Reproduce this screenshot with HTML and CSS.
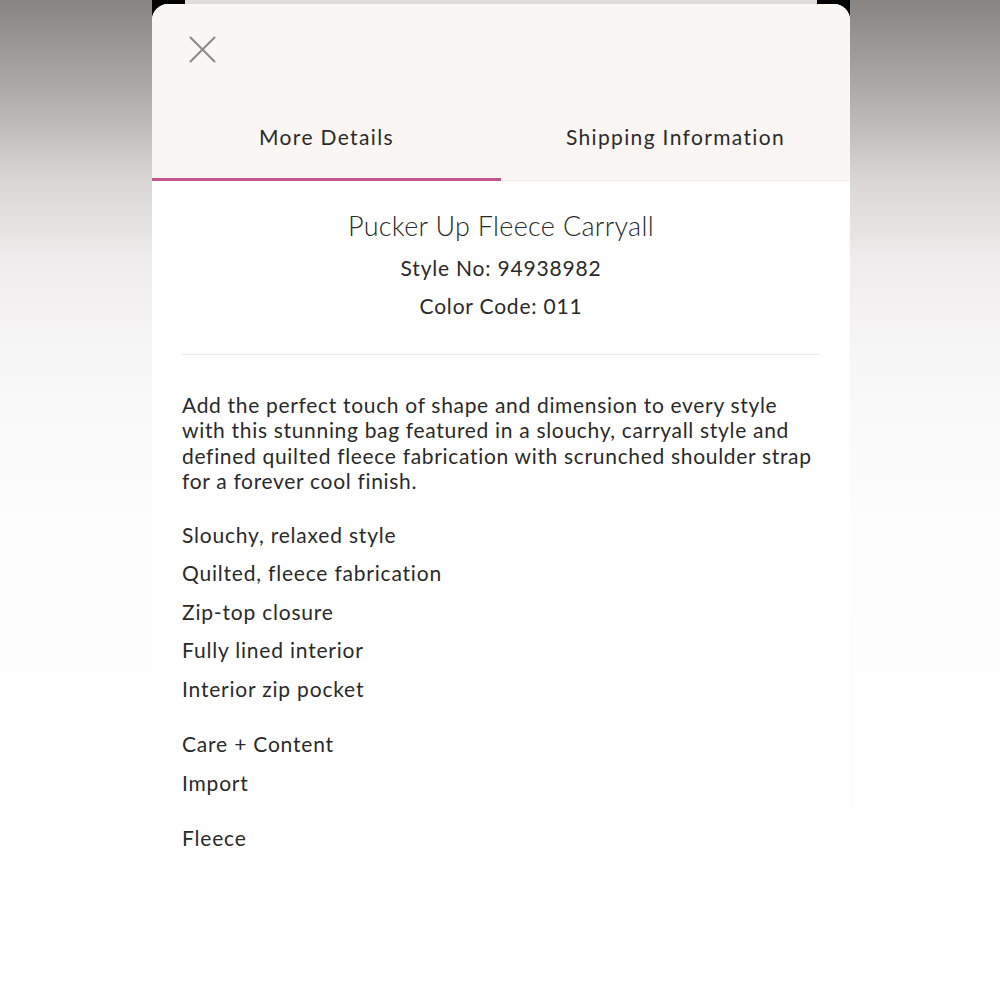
FILE: index.html
```html
<!DOCTYPE html>
<html lang="en">
<head>
<meta charset="utf-8">
<title>More Details</title>
<link rel="stylesheet" href="styles.css">
</head>
<body>
<div class="stage">
  <div class="phone">
    <div class="sheet">
      <header class="sheet-head">
        <div class="close-row">
          <button class="close" aria-label="Close">
            <svg width="28" height="28" viewBox="0 0 28 28" aria-hidden="true">
              <path d="M1.5 1.5 L25.5 25.5 M25.5 1.5 L1.5 25.5" stroke="#8d8985" stroke-width="2" fill="none" stroke-linecap="round"/>
            </svg>
          </button>
        </div>
        <nav class="tabs">
          <div class="tab tab-active">More Details</div>
          <div class="tab">Shipping Information</div>
        </nav>
      </header>
      <section class="sheet-body">
        <div class="product">
          <h1 class="product-name">Pucker Up Fleece Carryall</h1>
          <p class="product-meta">Style No: 94938982</p>
          <p class="product-meta">Color Code: 011</p>
        </div>
        <hr class="rule">
        <p class="desc">Add the perfect touch of shape and dimension to every style with this stunning bag featured in a slouchy, carryall style and defined quilted fleece fabrication with scrunched shoulder strap for a forever cool finish.</p>
        <ul class="features">
          <li>Slouchy, relaxed style</li>
          <li>Quilted, fleece fabrication</li>
          <li>Zip-top closure</li>
          <li>Fully lined interior</li>
          <li>Interior zip pocket</li>
        </ul>
        <div class="care">
          <p>Care + Content</p>
          <p>Import</p>
          <p class="care-gap">Fleece</p>
        </div>
      </section>
    </div>
  </div>
</div>
</body>
</html>
```

FILE: styles.css
```css
html, body {
  margin: 0;
  padding: 0;
}

body {
  font-family: Lato, "Open Sans", sans-serif;
  color: #2a2a2a;
  background: linear-gradient(to bottom, #878482 0px, #aeaaa7 90px, #d9d6d4 180px, #eeecec 260px, #f8f7f7 360px, #fdfdfd 520px, #fefefe 1000px);
  min-height: 1000px;
}

.stage {
  display: flex;
  justify-content: center;
  min-height: 1000px;
  padding-left: 2px;
}

.phone {
  width: 698px;
  min-height: 1000px;
  background:
    linear-gradient(to right, #000 0, #000 33px, #dedbd8 33px, #dedbd8 665px, #000 665px, #000 100%) top / 100% 20px no-repeat,
    #fff;
  padding-top: 4px;
  box-sizing: border-box;
  display: flex;
  flex-direction: column;
}

.sheet {
  flex: 1;
  background: #fff;
  border-radius: 16px 16px 0 0;
  overflow: hidden;
}

.sheet-head {
  background: #faf6f3;
}

.close-row {
  height: 96px;
  padding: 32px 0 0 37px;
  box-sizing: border-box;
}

.close {
  border: 0;
  padding: 0;
  margin: 0;
  background: none;
  width: 28px;
  height: 28px;
  display: block;
}

.close svg {
  display: block;
}

.tabs {
  display: grid;
  grid-template-columns: 1fr 1fr;
}

.tab {
  height: 81px;
  display: flex;
  align-items: center;
  justify-content: center;
  font-size: 21px;
  letter-spacing: 1.35px;
  color: #2b2b2b;
  padding-bottom: 9px;
  box-sizing: border-box;
  box-shadow: inset 0 -1px 0 #efebe8;
}

.tab-active {
  box-shadow: inset 0 -3px 0 #c5568d;
}

.sheet-body {
  padding: 0 30px 40px;
}

.product {
  text-align: center;
  padding-top: 26px;
  padding-bottom: 29px;
}

.product-name {
  margin: 0 0 4px;
  font-size: 27px;
  font-weight: 300;
  letter-spacing: 0.3px;
  line-height: 38px;
}

.product-meta {
  margin: 0;
  font-size: 21px;
  line-height: 38px;
  letter-spacing: 0.8px;
}

.rule {
  border: 0;
  border-top: 1px solid #eeecea;
  margin: 0;
}

.desc {
  margin: 37px 0 0;
  font-size: 21px;
  line-height: 25.4px;
  letter-spacing: 0.68px;
}

.features {
  list-style: none;
  margin: 22px 0 0;
  padding: 0;
}

.features li {
  font-size: 21px;
  line-height: 38.5px;
  letter-spacing: 0.8px;
}

.care {
  margin-top: 16px;
}

.care p {
  margin: 0;
  font-size: 21px;
  line-height: 39px;
  letter-spacing: 0.8px;
}

.care .care-gap {
  margin-top: 16px;
}
```
